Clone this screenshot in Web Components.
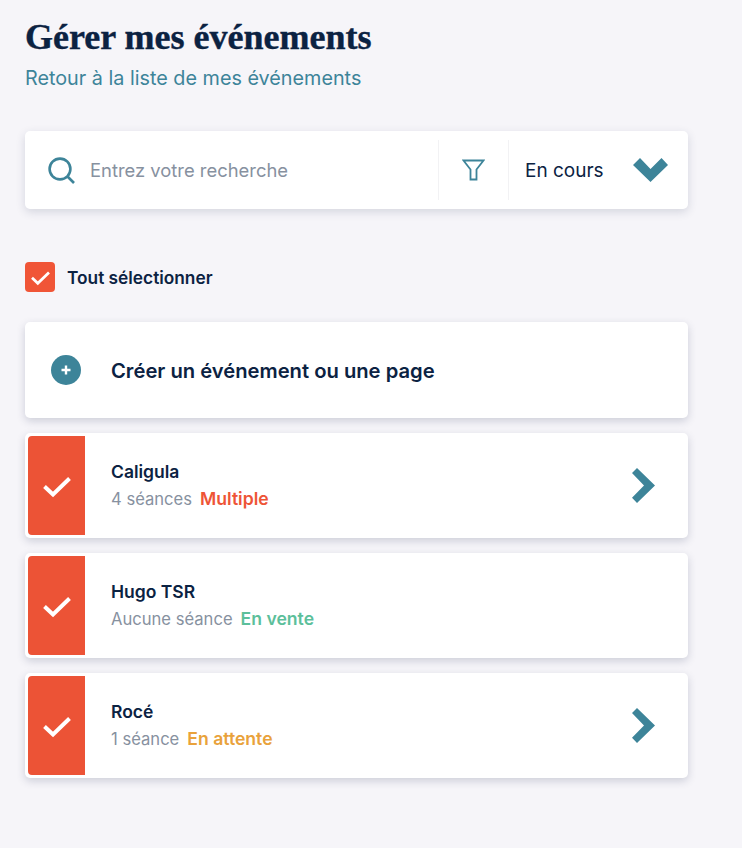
<!DOCTYPE html>
<html lang="fr">
<head>
<meta charset="utf-8">
<title>Gérer mes événements</title>
<style>
  html, body { margin: 0; background: #f6f5f9; }
  body { font-family: Inter, "Noto Sans", sans-serif; color: #0b2242; }
  events-page { display: block; }
</style>
</head>
<body>
<events-page>
  <page-header>
    <span slot="title">Gérer mes événements</span>
    <span slot="link">Retour à la liste de mes événements</span>
  </page-header>
  <search-bar placeholder="Entrez votre recherche" status="En cours"></search-bar>
  <select-all>Tout sélectionner</select-all>
  <create-card>Créer un événement ou une page</create-card>
  <event-row name="Caligula" sessions="4 séances" status="Multiple" tone="red" arrow></event-row>
  <event-row name="Hugo TSR" sessions="Aucune séance" status="En vente" tone="green"></event-row>
  <event-row name="Rocé" sessions="1 séance" status="En attente" tone="orange" arrow></event-row>
</events-page>

<script>
const checkIcon = (size) => `
  <svg width="${size}" height="${size}" viewBox="0 0 28 28" fill="none">
    <path d="M1.5 14.5L10 22.5L26.5 6.5" stroke="#fff" stroke-width="4"/>
  </svg>`;

class EventsPage extends HTMLElement {
  constructor() {
    super();
    this.root = this.attachShadow({ mode: 'open' });
    this.root.innerHTML = `
      <style>
        :host { display: block; padding: 0 54px 70px 25px; }
        .wrap { display: flex; flex-direction: column; }
      </style>
      <div class="wrap"><slot></slot></div>`;
  }
}

class PageHeader extends HTMLElement {
  constructor() {
    super();
    this.root = this.attachShadow({ mode: 'open' });
    this.root.innerHTML = `
      <style>
        :host { display: block; padding-top: 17px; }
        .title { font-family: "Liberation Serif", serif; font-weight: 700; font-size: 36px; line-height: 40px; -webkit-text-stroke: 0.4px #0b2242; color: #0b2242; }
        .link { font-size: 19.8px; line-height: 24px; margin-top: 9px; color: #3d8499; }
      </style>
      <div class="title"><slot name="title"></slot></div>
      <div class="link"><slot name="link"></slot></div>`;
  }
}

class SearchBar extends HTMLElement {
  constructor() {
    super();
    this.root = this.attachShadow({ mode: 'open' });
    this.root.innerHTML = `
      <style>
        :host { display: block; margin-top: 41px; }
        .bar { display: flex; height: 78px; align-items: center; background: #fff; border-radius: 5px; box-shadow: 0 3px 10px rgba(40, 50, 90, .16); }
        .query { flex: 1; display: flex; align-items: center; gap: 15px; padding-left: 23px; font-size: 18.4px; color: #87919f; }
        .filter { width: 69px; height: 60px; display: flex; align-items: center; justify-content: center; border-left: 1px solid #f2f2f4; border-right: 1px solid #f2f2f4; }
        .status { width: 179px; box-sizing: border-box; padding: 0 20px 0 16px; display: flex; align-items: center; justify-content: space-between; font-size: 19px; color: #0b2242; }
      </style>
      <div class="bar">
        <div class="query">
          <svg width="27" height="27" viewBox="0 0 27 27" fill="none" stroke="#3d8499" stroke-width="2.6">
            <circle cx="12" cy="12" r="10.4"/><path d="M19.5 19.5L26 26"/>
          </svg>
          <span id="placeholder"></span>
        </div>
        <div class="filter">
          <svg width="23" height="22" viewBox="0 0 23 22" fill="none" stroke="#3d8499" stroke-width="1.8">
            <path d="M1.5 1.5H21.5L14.5 10.5V20.5H8.5V10.5Z"/>
          </svg>
        </div>
        <div class="status">
          <span id="status"></span>
          <svg width="35" height="24" viewBox="0 0 35 24" fill="#3d8499">
            <path d="M0 7L7 0L17.5 11L28.5 0L35 7L17.5 24Z"/>
          </svg>
        </div>
      </div>`;
  }

  connectedCallback() {
    this.root.querySelector('#placeholder').textContent = this.getAttribute('placeholder');
    this.root.querySelector('#status').textContent = this.getAttribute('status');
  }
}

class SelectAll extends HTMLElement {
  constructor() {
    super();
    this.root = this.attachShadow({ mode: 'open' });
    this.root.innerHTML = `
      <style>
        :host { display: flex; align-items: center; gap: 12px; margin-top: 53px; font-size: 17.3px; font-weight: 600; color: #0b2242; }
        .box { width: 30px; height: 30px; border-radius: 4px; background: #f05537; display: flex; align-items: center; justify-content: center; }
      </style>
      <div class="box">${checkIcon(19)}</div>
      <slot></slot>`;
  }
}

class CreateCard extends HTMLElement {
  constructor() {
    super();
    this.root = this.attachShadow({ mode: 'open' });
    this.root.innerHTML = `
      <style>
        :host { display: flex; align-items: center; height: 96px; margin-top: 30px; padding-left: 26px; background: #fff; border-radius: 5px; box-shadow: 0 3px 8px rgba(40, 50, 90, .2); font-size: 20.2px; font-weight: 600; color: #0b2242; }
        .plus { width: 30px; height: 30px; margin-right: 30px; }
      </style>
      <svg class="plus" viewBox="0 0 30 30">
        <circle cx="15" cy="15" r="15" fill="#3d8499"/>
        <path d="M15 10.5V19.5M10.5 15H19.5" stroke="#fff" stroke-width="2.4"/>
      </svg>
      <slot></slot>`;
  }
}

class EventRow extends HTMLElement {
  constructor() {
    super();
    this.root = this.attachShadow({ mode: 'open' });
    this.root.innerHTML = `
      <style>
        :host { display: flex; align-items: center; height: 105px; box-sizing: border-box; margin-top: 15px; padding: 3px 32px 3px 3px; background: #fff; border-radius: 5px; box-shadow: 0 3px 8px rgba(40, 50, 90, .2); }
        .check { width: 57px; height: 99px; background: #ec5336; border-radius: 4px 0 0 4px; display: flex; align-items: center; justify-content: center; }
        .text { flex: 1; padding-left: 26px; }
        .name { font-size: 17.5px; font-weight: 600; line-height: 22px; color: #0b2242; }
        .meta { display: flex; gap: 8px; margin-top: 5px; font-size: 16.6px; line-height: 22px; color: #87919f; }
        .status { font-size: 17.6px; font-weight: 600; }
        .red { color: #ee5436; }
        .green { color: #5cbf9b; }
        .orange { color: #e9a23b; }
        .arrow { width: 24px; height: 35px; }
      </style>
      <div class="check">${checkIcon(28)}</div>
      <div class="text">
        <div class="name"></div>
        <div class="meta"><span class="sessions"></span><span class="status"></span></div>
      </div>
      <svg class="arrow" viewBox="0 0 24 35" fill="#3d8499">
        <path d="M5 0L23 17.5L5 35L0 29.7L12 17.5L0 5Z"/>
      </svg>`;
  }

  connectedCallback() {
    this.root.querySelector('.name').textContent = this.getAttribute('name');
    this.root.querySelector('.sessions').textContent = this.getAttribute('sessions');
    const status = this.root.querySelector('.status');
    status.textContent = this.getAttribute('status');
    status.classList.add(this.getAttribute('tone'));
    if (!this.hasAttribute('arrow')) {
      this.root.querySelector('.arrow').style.visibility = 'hidden';
    }
  }
}

customElements.define('events-page', EventsPage);
customElements.define('page-header', PageHeader);
customElements.define('search-bar', SearchBar);
customElements.define('select-all', SelectAll);
customElements.define('create-card', CreateCard);
customElements.define('event-row', EventRow);
</script>
</body>
</html>
